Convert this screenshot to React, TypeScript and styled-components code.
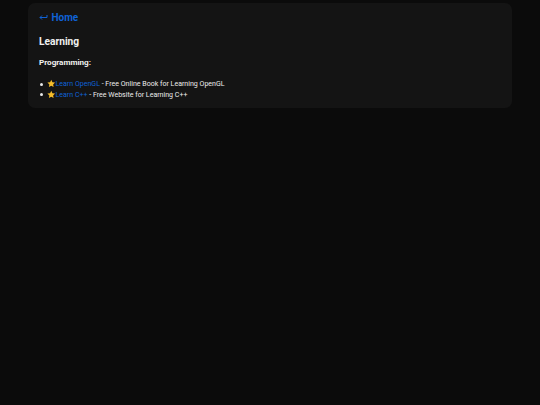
import React from "react";
import styled, { createGlobalStyle } from "styled-components";

const Global = createGlobalStyle`
  html, body { margin: 0; padding: 0; background: #0b0b0b; height: 100%; }
  body { font-family: "Roboto", "Liberation Sans", sans-serif; color: #fff; min-height: 405px; }
`;
const Page = styled.main`
  width: 484px;
  margin: 0 auto;
  padding-top: 3px;
`;
const Card = styled.section`
  box-sizing: border-box;
  height: 105px;
  padding: 8px 10px 0 11px;
  background: #141414;
  border-radius: 7px;
`;
const HomeLink = styled.a`
  display: flex;
  align-items: center;
  gap: 3.5px;
  height: 14px;
  font-size: 10px;
  line-height: 14px;
  font-weight: 700;
  color: #0f62d6;
  text-decoration: none;
`;
const Arrow = styled.svg`
  width: 9px;
  height: 7px;
  margin-top: -2px;
  flex: none;
`;
const Title = styled.h1`
  margin: 10px 0 0;
  font-size: 10.2px;
  line-height: 14px;
  font-weight: 700;
  color: #f0f0f0;
`;
const Section = styled.p`
  margin: 8px 0 0;
  font-size: 8.1px;
  line-height: 11px;
  font-weight: 700;
  color: #f0f0f0;
`;
const List = styled.ul`
  margin: 11px 0 0;
  padding: 0;
  list-style: none;
  font-size: 7.05px;
  line-height: 10.5px;
  color: #ececec;
`;
const Item = styled.li`
  display: flex;
  align-items: center;
  white-space: pre;
  &::before {
    content: "";
    width: 3px;
    height: 3px;
    margin: 0 4.5px 0 0.5px;
    border-radius: 50%;
    background: #e8e8e8;
    flex: none;
  }
`;
const Star = styled.svg`
  width: 8.5px;
  height: 9px;
  flex: none;
  margin-top: -1px;
`;
const ItemLink = styled.a`
  color: #0f62d6;
  text-decoration: none;
`;

const StarIcon = () => (
  <Star viewBox="0 0 24 24">
    <path fill="#f6bd2b" d="M12 1.5l3.3 6.9 7.5 1-5.5 5.2 1.4 7.5L12 18.4l-6.7 3.7 1.4-7.5L1.2 9.4l7.5-1z" />
  </Star>
);

export default function App() {
  return (
    <Page>
      <Global />
      <Card>
        <HomeLink href="#">
          <Arrow viewBox="0 0 9 7" fill="none" stroke="#0f62d6" strokeWidth="1">
            <path d="M8 1v2.5H1M3 1.5L1 3.5l2 2" />
          </Arrow>
          Home
        </HomeLink>
        <Title>Learning</Title>
        <Section>Programming:</Section>
        <List>
          <Item>
            <StarIcon />
            <ItemLink href="#">Learn OpenGL</ItemLink>
            <span> - Free Online Book for Learning OpenGL</span>
          </Item>
          <Item>
            <StarIcon />
            <ItemLink href="#">Learn C++</ItemLink>
            <span> - Free Website for Learning C++</span>
          </Item>
        </List>
      </Card>
    </Page>
  );
}
